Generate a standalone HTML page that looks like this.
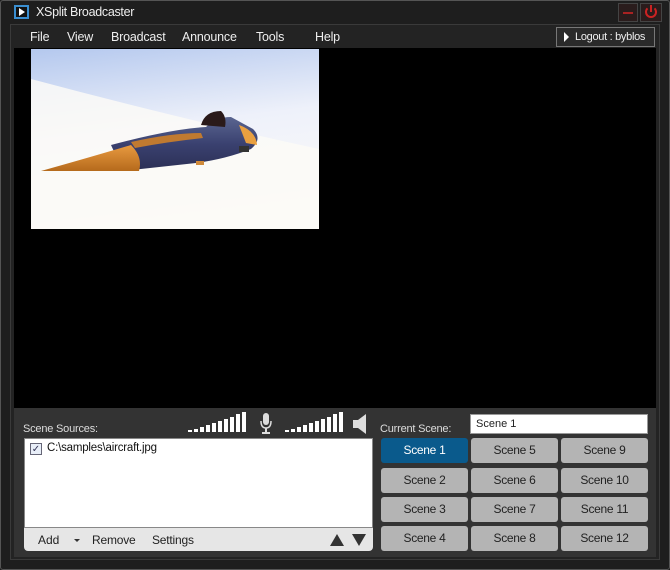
<!DOCTYPE html>
<html><head><meta charset="utf-8"><style>
*{margin:0;padding:0;box-sizing:border-box}
body{width:670px;height:570px;background:#1c1c1c;font-family:"Liberation Sans",sans-serif;position:relative;overflow:hidden;color:#fff}
.abs{position:absolute}
.win{left:0;top:0;width:670px;height:570px;border:1px solid #555;border-radius:3px;background:#1e1e1e}
.inner{left:10px;top:24px;width:650px;height:536px;background:#232323;border:1px solid #3a3a3a}
.menu span{position:absolute;top:30px;font-size:12.5px;color:#eee;letter-spacing:-0.2px}
.prev{left:14px;top:48px;width:642px;height:360px;background:#000}
.panel{left:14px;top:408px;width:642px;height:149px;background:#333}
.btn{position:absolute;width:87px;height:25px;background:#b4b4b4;border-radius:3px;color:#222;font-size:12px;text-align:center;line-height:25px;letter-spacing:-0.3px}
.btn.sel{background:#0a5a8c;color:#fff}
.bar{position:absolute;width:4px;background:#fff;bottom:0}
</style></head><body>
<div class="abs win"></div>
<div class="abs" style="left:14px;top:5px;width:15px;height:14px;border:2px solid #3a8ed0;background:#111"></div>
<div class="abs" style="left:19px;top:8px;width:0;height:0;border-left:6px solid #fff;border-top:4px solid transparent;border-bottom:4px solid transparent"></div>
<div class="abs" style="left:36px;top:5px;font-size:12.5px;color:#eee;letter-spacing:-0.3px">XSplit Broadcaster</div>
<div class="abs" style="left:618px;top:3px;width:20px;height:19px;background:#2a1c1c;border:1px solid #444"></div>
<div class="abs" style="left:623px;top:12px;width:10px;height:2px;background:#a22"></div>
<div class="abs" style="left:640px;top:3px;width:22px;height:19px;background:#2a1c1c;border:1px solid #444"></div>
<div class="abs" style="left:645px;top:6px;width:12px;height:12px;border:2px solid #c22;border-radius:50%;border-top-color:transparent"></div>
<div class="abs" style="left:650px;top:5px;width:2px;height:7px;background:#c22"></div>
<div class="abs inner"></div>
<div class="menu"><span style="left:30px">File</span><span style="left:67px">View</span><span style="left:111px">Broadcast</span><span style="left:182px">Announce</span><span style="left:256px">Tools</span><span style="left:315px">Help</span></div>
<div class="abs" style="left:556px;top:27px;width:99px;height:20px;border:1px solid #777;background:#2a2a2a"></div>
<div class="abs" style="left:564px;top:32px;width:0;height:0;border-left:5px solid #fff;border-top:5px solid transparent;border-bottom:5px solid transparent"></div>
<div class="abs" style="left:575px;top:31px;font-size:11px;color:#eee;letter-spacing:-0.3px">Logout : byblos</div>
<div class="abs prev"></div>
<svg class="abs" style="left:31px;top:49px" width="288" height="180">
<defs>
<linearGradient id="sky" x1="0" y1="0" x2="0.2" y2="1"><stop offset="0" stop-color="#b4c8ee"/><stop offset="0.5" stop-color="#eef1fa"/><stop offset="1" stop-color="#fbfaf8"/></linearGradient>
<linearGradient id="body" x1="0" y1="0" x2="0" y2="1"><stop offset="0" stop-color="#5a6590"/><stop offset="0.5" stop-color="#3a4170"/><stop offset="1" stop-color="#2b2f55"/></linearGradient>
<linearGradient id="nose" x1="0" y1="0" x2="0" y2="1"><stop offset="0" stop-color="#e89a40"/><stop offset="1" stop-color="#b56a1c"/></linearGradient>
</defs>
<rect width="288" height="180" fill="url(#sky)"/>
<path d="M0 30 Q150 70 288 100 L288 180 L0 180Z" fill="#fbfaf7" opacity="0.85"/>
<path d="M80 96 Q140 80 175 78 Q185 68 200 68 L222 80 Q232 90 220 100 Q195 110 165 114 L92 122 Z" fill="url(#body)"/>
<path d="M10 122 Q60 108 100 96 Q112 108 108 122 Z" fill="url(#nose)"/>
<path d="M100 93 Q140 84 170 84 L172 89 Q135 93 104 99Z" fill="#c07a30"/>
<path d="M170 76 Q174 62 190 62 Q196 68 194 78Z" fill="#2a1a1a"/>
<path d="M208 76 Q225 82 226 96 L215 94Z" fill="#e9a040"/>
<rect x="208" y="97" width="10" height="6" fill="#333"/>
<rect x="165" y="112" width="8" height="4" fill="#d08a3a"/>
</svg>
<div class="abs panel"></div>
<div class="abs" style="left:23px;top:423px;font-size:11px;color:#ddd;letter-spacing:-0.2px">Scene Sources:</div>
<div class="abs" style="left:188px;top:412px;width:60px;height:20px">
<div class="bar" style="left:0;height:2px"></div><div class="bar" style="left:6px;height:3px"></div><div class="bar" style="left:12px;height:5px"></div><div class="bar" style="left:18px;height:7px"></div><div class="bar" style="left:24px;height:9px"></div><div class="bar" style="left:30px;height:11px"></div><div class="bar" style="left:36px;height:13px"></div><div class="bar" style="left:42px;height:15px"></div><div class="bar" style="left:48px;height:18px"></div><div class="bar" style="left:54px;height:20px"></div></div>
<svg class="abs" style="left:259px;top:413px" width="14" height="21"><rect x="4" y="0" width="6" height="12" rx="3" fill="#ddd"/><path d="M2 8 Q2 15 7 15 Q12 15 12 8" stroke="#ddd" stroke-width="1.5" fill="none"/><rect x="6" y="15" width="2" height="4" fill="#ddd"/><rect x="3" y="19" width="8" height="2" fill="#ddd"/></svg>
<div class="abs" style="left:285px;top:412px;width:60px;height:20px">
<div class="bar" style="left:0;height:2px"></div><div class="bar" style="left:6px;height:3px"></div><div class="bar" style="left:12px;height:5px"></div><div class="bar" style="left:18px;height:7px"></div><div class="bar" style="left:24px;height:9px"></div><div class="bar" style="left:30px;height:11px"></div><div class="bar" style="left:36px;height:13px"></div><div class="bar" style="left:42px;height:15px"></div><div class="bar" style="left:48px;height:18px"></div><div class="bar" style="left:54px;height:20px"></div></div>
<svg class="abs" style="left:352px;top:414px" width="16" height="20"><path d="M1 6 L6 6 L14 0 L14 20 L6 14 L1 14Z" fill="#ddd"/></svg>
<div class="abs" style="left:380px;top:423px;font-size:11px;color:#ddd;letter-spacing:-0.2px">Current Scene:</div>
<div class="abs" style="left:470px;top:414px;width:178px;height:20px;background:#fff;border:1px solid #999;color:#222;font-size:11px;padding:3px 5px">Scene 1</div>
<div class="abs" style="left:24px;top:438px;width:349px;height:90px;background:#fff;border:1px solid #888"></div>
<div class="abs" style="left:30px;top:443px;width:12px;height:12px;border:1px solid #667;background:#e8eef8;color:#335;font-size:10px;line-height:11px;text-align:center">✓</div>
<div class="abs" style="left:47px;top:442px;font-size:11.5px;color:#111;letter-spacing:-0.2px">C:\samples\aircraft.jpg</div>
<div class="abs" style="left:24px;top:528px;width:349px;height:23px;background:#e6e6e6;border-radius:0 0 4px 4px"></div>
<div class="abs" style="left:38px;top:533px;font-size:12px;color:#222">Add</div>
<div class="abs" style="left:74px;top:539px;border-top:3px solid #333;border-left:3px solid transparent;border-right:3px solid transparent"></div>
<div class="abs" style="left:92px;top:533px;font-size:12px;color:#222;letter-spacing:-0.2px">Remove</div>
<div class="abs" style="left:152px;top:533px;font-size:12px;color:#222;letter-spacing:-0.2px">Settings</div>
<div class="abs" style="left:330px;top:534px;border-bottom:12px solid #333;border-left:7px solid transparent;border-right:7px solid transparent"></div>
<div class="abs" style="left:352px;top:534px;border-top:12px solid #333;border-left:7px solid transparent;border-right:7px solid transparent"></div>
<div class="btn sel" style="left:381px;top:438px">Scene 1</div>
<div class="btn" style="left:471px;top:438px">Scene 5</div>
<div class="btn" style="left:561px;top:438px">Scene 9</div>
<div class="btn" style="left:381px;top:468px">Scene 2</div>
<div class="btn" style="left:471px;top:468px">Scene 6</div>
<div class="btn" style="left:561px;top:468px">Scene 10</div>
<div class="btn" style="left:381px;top:497px">Scene 3</div>
<div class="btn" style="left:471px;top:497px">Scene 7</div>
<div class="btn" style="left:561px;top:497px">Scene 11</div>
<div class="btn" style="left:381px;top:526px">Scene 4</div>
<div class="btn" style="left:471px;top:526px">Scene 8</div>
<div class="btn" style="left:561px;top:526px">Scene 12</div>
</body></html>
